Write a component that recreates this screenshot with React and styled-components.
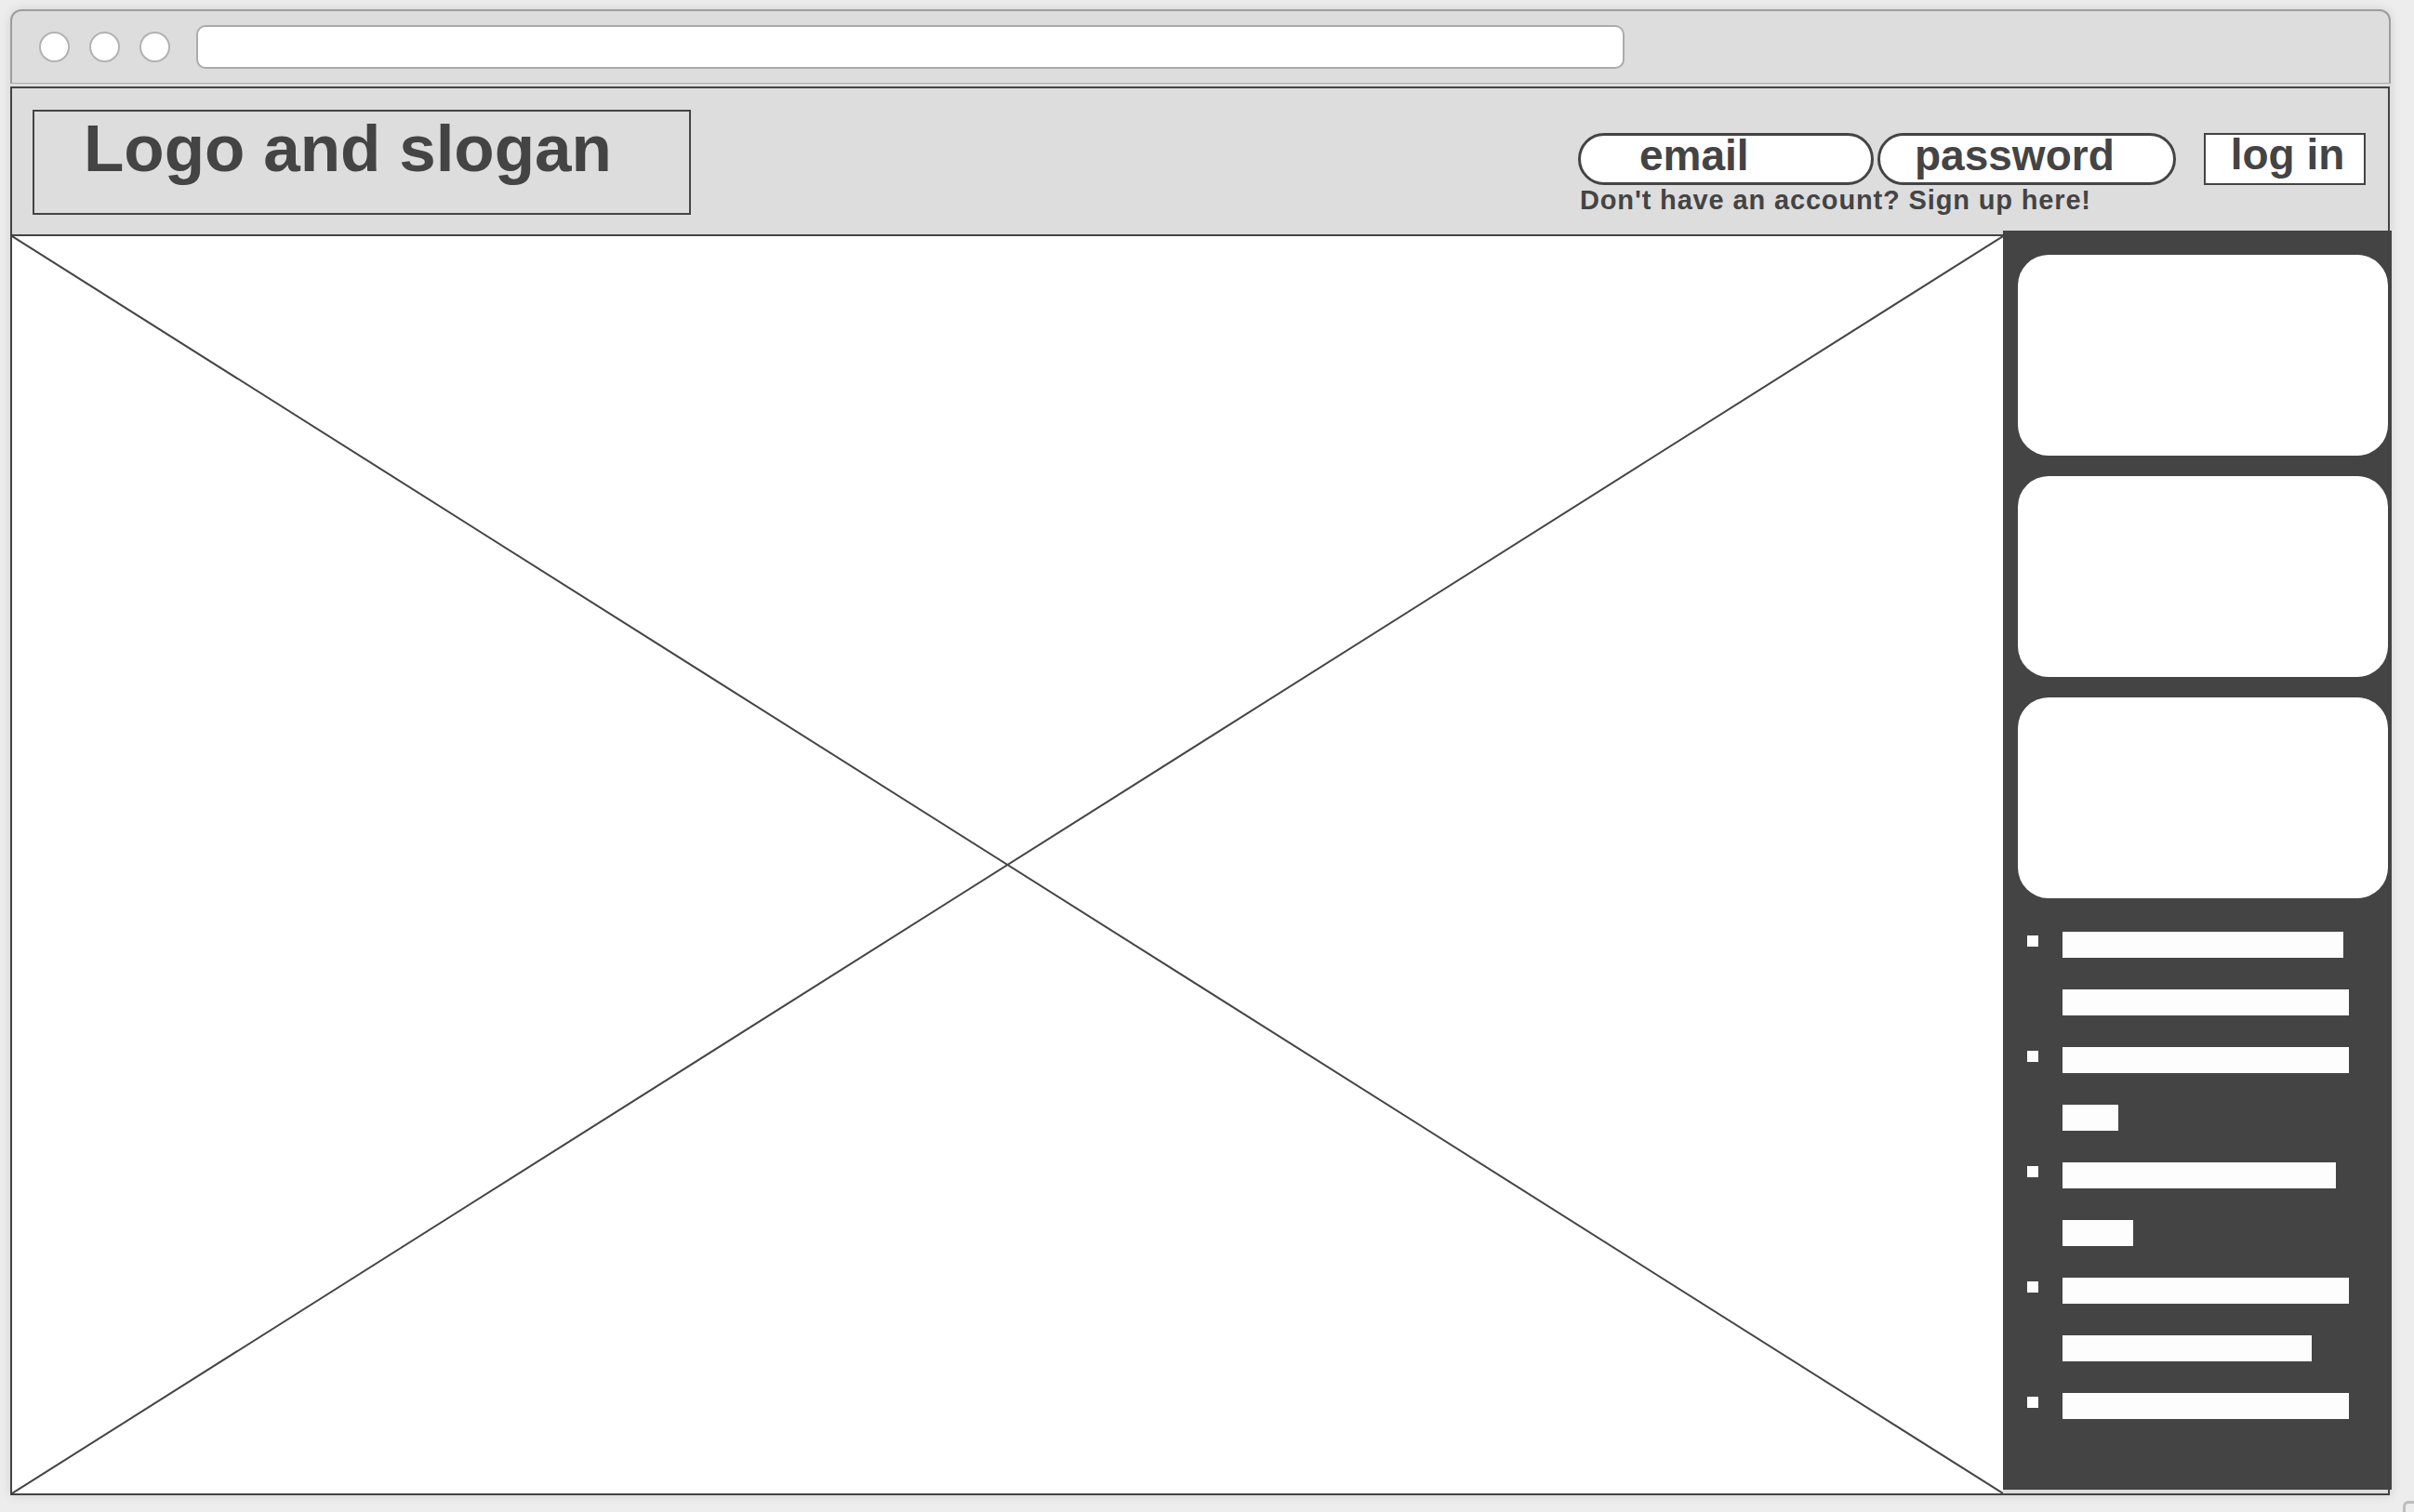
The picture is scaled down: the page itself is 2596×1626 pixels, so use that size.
import React from "react";
import styled, { createGlobalStyle } from "styled-components";

const Global = createGlobalStyle`
  html, body {
    margin: 0;
    padding: 0;
    background: #ededed;
  }
  body {
    font-family: "Liberation Sans", Arial, Helvetica, sans-serif;
    color: #444444;
  }
  * { box-sizing: border-box; }
`;

const Root = styled.div`
  position: relative;
  width: 2596px;
  height: 1626px;
  padding: 10px 0 0 11px;
  overflow: hidden;
`;

const Window = styled.div`
  width: 2560px;
  display: flex;
  flex-direction: column;
  background: #dddddd;
  border-radius: 12px 12px 0 0;
  box-shadow: 0 0 12px rgba(0, 0, 0, 0.12);
`;

const TitleBar = styled.div`
  height: 80px;
  display: flex;
  align-items: center;
  padding-left: 29px;
  background: #dddddd;
  border: 2px solid #9d9d9d;
  border-bottom: 1px solid #ababab;
  border-radius: 12px 12px 0 0;
`;

const Dot = styled.span`
  width: 33px;
  height: 33px;
  border-radius: 50%;
  background: #ffffff;
  border: 2px solid #b2b2b2;
  margin-right: 21px;
`;

const UrlBar = styled.div`
  margin-left: 7px;
  width: 1536px;
  height: 47px;
  background: #ffffff;
  border: 2px solid #ababab;
  border-radius: 10px;
`;

const Page = styled.div`
  width: 2559px;
  margin-top: 3px;
  border: 2px solid #444444;
  background: #dddddd;
  display: flex;
  flex-direction: column;
`;

const Header = styled.header`
  height: 159px;
  display: flex;
  align-items: flex-start;
  justify-content: space-between;
  padding: 23px 24px 0 22px;
  border-bottom: 2px solid #444444;
`;

const LogoBox = styled.div`
  width: 708px;
  height: 113px;
  border: 2px solid #444444;
  padding-left: 53px;
  font-size: 71px;
  font-weight: 700;
  line-height: 80px;
  color: #444444;
`;

const AuthArea = styled.div`
  margin-top: 25px;
  display: flex;
  align-items: flex-start;
`;

const AuthColumn = styled.div`
  display: flex;
  flex-direction: column;
`;

const PillRow = styled.div`
  display: flex;
  gap: 4px;
`;

const Pill = styled.div`
  width: ${(p) => p.$w}px;
  height: 56px;
  padding-left: ${(p) => p.$pad}px;
  background: #ffffff;
  border: 3px solid #444444;
  border-radius: 28px;
  font-size: 46px;
  font-weight: 700;
  line-height: 42px;
  color: #444444;
`;

const SignUp = styled.div`
  margin-left: 2px;
  font-size: 29px;
  font-weight: 700;
  line-height: 33px;
  letter-spacing: 0.85px;
  color: #444444;
`;

const LoginButton = styled.div`
  margin-left: 30px;
  width: 174px;
  height: 56px;
  padding-left: 6px;
  background: #ffffff;
  border: 2px solid #444444;
  font-size: 46px;
  font-weight: 700;
  line-height: 42px;
  text-align: center;
  color: #444444;
`;

const MainRow = styled.div`
  height: 1352px;
  display: flex;
`;

const ImageArea = styled.div`
  flex: 1;
  background: #ffffff;
`;

const Cross = styled.svg`
  display: block;
  width: 100%;
  height: 100%;
`;

const Sidebar = styled.aside`
  width: 418px;
  margin: -6px -4px 4px 0;
  padding: 26px 4px 0 16px;
  background: #444444;
  display: flex;
  flex-direction: column;
`;

const CardStack = styled.div`
  display: flex;
  flex-direction: column;
  gap: 22px;
`;

const Card = styled.div`
  height: 216px;
  background: #ffffff;
  border-radius: 33px;
`;

const List = styled.div`
  margin: 36px 0 0 10px;
  display: flex;
  flex-direction: column;
  gap: 34px;
`;

const Item = styled.div`
  display: flex;
  align-items: flex-start;
  gap: 26px;
`;

const Bullet = styled.span`
  width: 12px;
  height: 12px;
  margin-top: 4px;
  background: #ffffff;
  flex-shrink: 0;
`;

const Lines = styled.div`
  display: flex;
  flex-direction: column;
  gap: 34px;
`;

const Bar = styled.span`
  display: block;
  height: 28px;
  background: #fdfdfd;
`;

const Grip = styled.div`
  position: absolute;
  left: 2584px;
  top: 1614px;
  width: 24px;
  height: 24px;
  border-top: 3px solid #bdbdbd;
  border-left: 3px solid #bdbdbd;
  border-top-left-radius: 6px;
`;

const items = [[302, 308], [308, 60], [294, 76], [308, 268], [308]];

export default function App() {
  return (
    <>
      <Global />
      <Root>
        <Window>
          <TitleBar>
            <Dot />
            <Dot />
            <Dot />
            <UrlBar />
          </TitleBar>
          <Page>
            <Header>
              <LogoBox>Logo and slogan</LogoBox>
              <AuthArea>
                <AuthColumn>
                  <PillRow>
                    <Pill $w={318} $pad={63}>email</Pill>
                    <Pill $w={321} $pad={37}>password</Pill>
                  </PillRow>
                  <SignUp>Don't have an account? Sign up here!</SignUp>
                </AuthColumn>
                <LoginButton>log in</LoginButton>
              </AuthArea>
            </Header>
            <MainRow>
              <ImageArea>
                <Cross viewBox="0 0 100 100" preserveAspectRatio="none">
                  <line x1="0" y1="0" x2="100" y2="100" stroke="#444" strokeWidth="2" vectorEffect="non-scaling-stroke" />
                  <line x1="100" y1="0" x2="0" y2="100" stroke="#444" strokeWidth="2" vectorEffect="non-scaling-stroke" />
                </Cross>
              </ImageArea>
              <Sidebar>
                <CardStack>
                  <Card />
                  <Card />
                  <Card />
                </CardStack>
                <List>
                  {items.map((bars, i) => (
                    <Item key={i}>
                      <Bullet />
                      <Lines>
                        {bars.map((w, j) => (
                          <Bar key={j} style={{ width: w }} />
                        ))}
                      </Lines>
                    </Item>
                  ))}
                </List>
              </Sidebar>
            </MainRow>
          </Page>
        </Window>
        <Grip />
      </Root>
    </>
  );
}
